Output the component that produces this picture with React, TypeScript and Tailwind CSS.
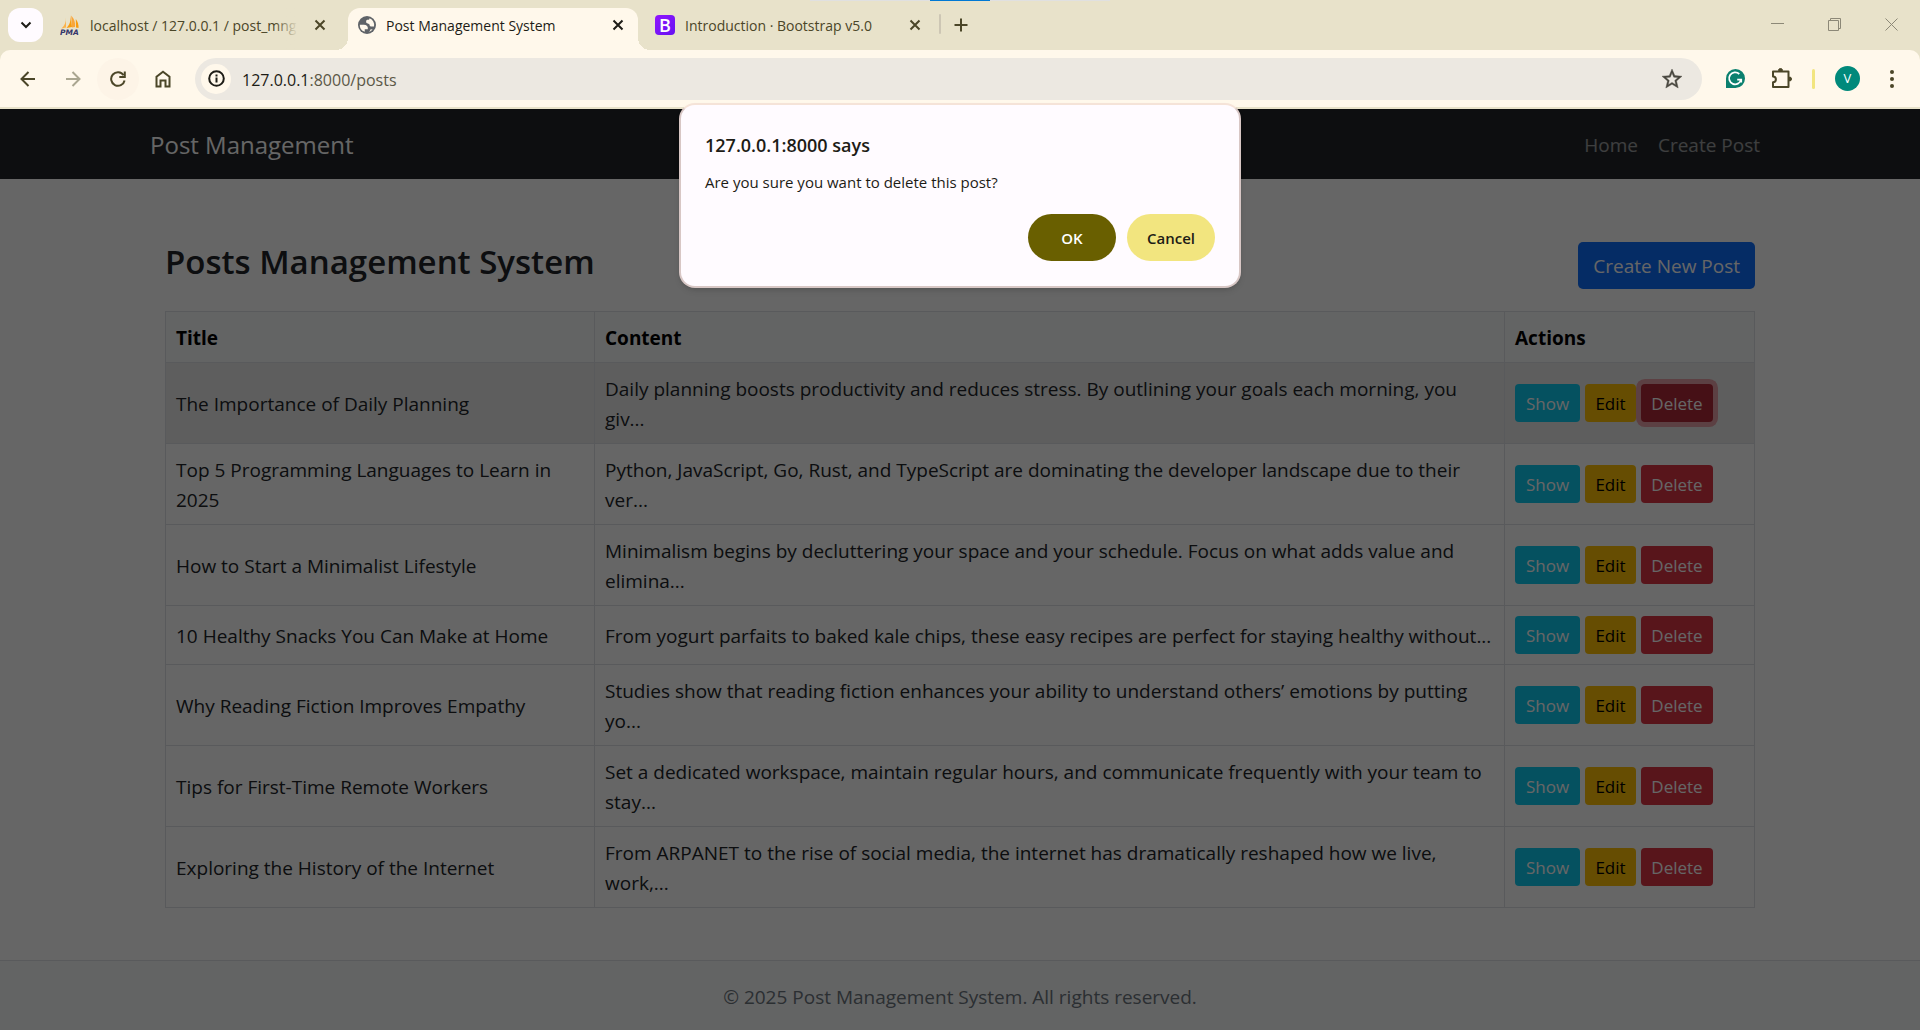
import type { ReactNode } from "react";

const posts = [
  { title: "The Importance of Daily Planning", content: "Daily planning boosts productivity and reduces stress. By outlining your goals each morning, you giv...", active: true },
  { title: "Top 5 Programming Languages to Learn in 2025", content: "Python, JavaScript, Go, Rust, and TypeScript are dominating the developer landscape due to their ver..." },
  { title: "How to Start a Minimalist Lifestyle", content: "Minimalism begins by decluttering your space and your schedule. Focus on what adds value and elimina..." },
  { title: "10 Healthy Snacks You Can Make at Home", content: "From yogurt parfaits to baked kale chips, these easy recipes are perfect for staying healthy without..." },
  { title: "Why Reading Fiction Improves Empathy", content: "Studies show that reading fiction enhances your ability to understand others’ emotions by putting yo..." },
  { title: "Tips for First-Time Remote Workers", content: "Set a dedicated workspace, maintain regular hours, and communicate frequently with your team to stay..." },
  { title: "Exploring the History of the Internet", content: "From ARPANET to the rise of social media, the internet has dramatically reshaped how we live, work,..." },
];

function CloseIcon() {
  return (
    <svg viewBox="0 0 12 12" className="size-3" fill="none" stroke="currentColor" strokeWidth="2">
      <path d="M1.5 1.5l9 9M10.5 1.5l-9 9" />
    </svg>
  );
}

function PmaIcon() {
  return (
    <svg viewBox="0 0 20 20" className="size-5 shrink-0" aria-hidden="true">
      <path d="M6 2.5C6.200 7 4.500 11 1.500 13.500L6 12.500z" fill="#fbb34c" />
      <path d="M10.500 0C11 6 9.500 10 6.500 13L12 12z" fill="#f89c0e" />
      <path d="M11.200 0.500C14.500 4 15.500 8 15 12L12 12.500z" fill="#f9a63a" />
      <path d="M15.800 4C18 7 18.700 10 18.500 13L16 12.500z" fill="#f89c0e" />
      <text x="0" y="19.500" fontSize="7.500" fontWeight="bold" fontStyle="italic" fontFamily="DejaVu Sans, sans-serif" fill="#34366b">PMA</text>
    </svg>
  );
}

function GlobeIcon() {
  return (
    <svg viewBox="2 2 20 20" className="size-[18px] shrink-0" aria-hidden="true">
      <circle cx="12" cy="12" r="10" fill="#5f6368" />
      <path d="M4 11.600h4.400c3.410.020 4.920 1.730 4.540 5.130H9.490v2.870A8 8 0 0 1 4 11.600z" fill="#fff8eb" />
      <path d="M14.800 4.500A8 8 0 0 1 19.800 13.600h-2.600c-1.600 0-2.400-.700-2.400-2 0-1.700-3.800-.700-3.800-3.300 0-1.600 1-2 2.200-2 .900 0 1.600-.700 1.600-1.800z" fill="#fff8eb" />
      <path d="M13 19.900c1.700-.500 2.700-1.600 3-3.200l2.300.200A8 8 0 0 1 13 19.900z" fill="#fff8eb" />
    </svg>
  );
}

function BootstrapIcon() {
  return (
    <span className="flex size-5 shrink-0 items-center justify-center rounded bg-linear-to-br from-[#9013fe] to-[#6610f2] text-lg font-semibold leading-5 text-white" aria-hidden="true">
      B
    </span>
  );
}

function Tab({ icon, label, className }: { icon: ReactNode; label: string; className: string }) {
  return (
    <div className={"flex h-[42px] items-center text-sm " + className}>
      {icon}
      <span className="ml-2.5 grow whitespace-nowrap pt-0.5">{label}</span>
      <button type="button" aria-label={"Close " + label} className="ml-2.5 flex size-5 shrink-0 items-center justify-center">
        <CloseIcon />
      </button>
    </div>
  );
}

function TabStrip() {
  return (
    <div className="relative flex h-[50px] items-end bg-[#e8e2ca] text-[#4b4628]">
      <div className="absolute inset-x-0 top-0 mx-auto flex h-px w-[300px] justify-center bg-[#e0e0e0]">
        <span className="h-px w-[60px] bg-[#0078d4]" />
      </div>
      <button type="button" aria-label="Search tabs" className="mb-2 ml-2 flex h-[34px] w-[35px] shrink-0 items-center justify-center rounded-xl bg-[#fffbff] text-[#1d1c16]">
        <svg viewBox="0 0 12 12" className="size-3" fill="none" stroke="currentColor" strokeWidth="2">
          <path d="M1.500 3.500L6 8l4.500-4.500" />
        </svg>
      </button>
      <div className="relative ml-[17px] flex w-[288px]">
        <Tab icon={<PmaIcon />} label="localhost / 127.0.0.1 / post_mng" className="w-[270px] pb-2" />
        <span className="absolute inset-y-0 left-[214px] w-6 bg-linear-to-r from-transparent to-[#e8e2ca]" />
      </div>
      <div className="relative">
        <span className="absolute bottom-0 -left-3 size-3 bg-[radial-gradient(circle_at_top_left,transparent_12px,#fff8eb_12px)]" />
        <Tab icon={<GlobeIcon />} label="Post Management System" className="w-[290px] rounded-t-xl bg-[#fff8eb] px-2.5 pb-2 text-[#1d1c16]" />
        <span className="absolute -right-3 bottom-0 size-3 bg-[radial-gradient(circle_at_top_right,transparent_12px,#fff8eb_12px)]" />
      </div>
      <Tab icon={<BootstrapIcon />} label="Introduction · Bootstrap v5.0" className="ml-[17px] w-[270px] pb-2" />
      <span className="mb-4 ml-3.5 h-5 w-0.5 rounded-full bg-[#cdc6b4]" />
      <button type="button" aria-label="New tab" className="mb-[17px] ml-3 flex size-4 items-center justify-center">
        <svg viewBox="0 0 14 14" className="size-3.5" fill="none" stroke="currentColor" strokeWidth="2">
          <path d="M7 0.500v13M0.500 7h13" />
        </svg>
      </button>
      <div className="mb-[19px] ml-auto flex items-center gap-11 pr-[22px] text-[#8c8877]">
        <button type="button" aria-label="Minimize" className="flex">
          <svg viewBox="0 0 13 13" className="size-[13px]" stroke="currentColor"><path d="M0 5.500h13" /></svg>
        </button>
        <button type="button" aria-label="Restore" className="flex">
          <svg viewBox="0 0 13 13" className="size-[13px]" fill="none" stroke="currentColor"><path d="M0.500 2.500h10v10h-10zM2.500 2.500v-2h10v10h-2" /></svg>
        </button>
        <button type="button" aria-label="Close window" className="flex">
          <svg viewBox="0 0 13 13" className="size-[13px]" fill="none" stroke="currentColor"><path d="M0.500 0.500l12 12M12.500 0.500l-12 12" /></svg>
        </button>
      </div>
    </div>
  );
}

function Toolbar() {
  return (
    <div className="bg-[#e8e2ca]">
      <div className="flex h-[57px] items-center rounded-t-[10px] bg-[#fff8eb] pl-[7px] pr-[18px] text-[#4b4628]">
        <button type="button" aria-label="Back" className="flex size-[42px] items-center justify-center">
          <svg viewBox="0 0 16 16" className="size-4" fill="none" stroke="currentColor" strokeWidth="2"><path d="M15 8H2M8.500 1L1.500 8l7 7" /></svg>
        </button>
        <button type="button" aria-label="Forward" className="ml-[3px] flex size-[42px] items-center justify-center text-[#aaa690]">
          <svg viewBox="0 0 16 16" className="size-4" fill="none" stroke="currentColor" strokeWidth="2"><path d="M1 8h13M7.500 1l7 7-7 7" /></svg>
        </button>
        <button type="button" aria-label="Reload" className="ml-[3px] flex size-[42px] items-center justify-center rounded-full bg-[#fdf4e7]">
          <svg viewBox="0 0 16 16" className="size-4" fill="none" stroke="currentColor" strokeWidth="2"><path d="M14.600 9.500A6.800 6.800 0 1 1 13.600 4.200" /><path d="M14.800 0.500v5.500H9.300" /></svg>
        </button>
        <button type="button" aria-label="Home" className="ml-[3px] flex size-[42px] items-center justify-center">
          <svg viewBox="0 0 16 18" className="h-[18px] w-4" fill="none" stroke="currentColor" strokeWidth="2"><path d="M1.500 16.500V6.800L8 1.700l6.500 5.100v9.700h-4v-6h-5v6z" /></svg>
        </button>
        <div className="ml-[11px] flex h-[42px] grow items-center rounded-full bg-[#ece8e1] pl-1.5 pr-5">
          <button type="button" aria-label="View site information" className="flex size-[30px] items-center justify-center rounded-full bg-[#fff8eb] text-[#1d1c16]">
            <svg viewBox="0 0 17 17" className="size-[17px]" fill="none" stroke="currentColor" strokeWidth="2"><circle cx="8.500" cy="8.500" r="7.300" /><path d="M8.500 7.600v4.800M8.500 4.500v1.900" /></svg>
          </button>
          <label className="relative ml-[11px] grow pt-0.5 text-base leading-6">
            <span aria-hidden="true" className="text-[#1d1c16]">127.0.0.1<span className="text-[#5b5747]">:8000/posts</span></span>
            <input aria-label="Address" defaultValue="127.0.0.1:8000/posts" className="absolute inset-0 w-full bg-transparent text-transparent outline-none" />
          </label>
          <button type="button" aria-label="Bookmark" className="flex text-[#49473f]">
            <svg viewBox="2 2 20 20" className="size-5" fill="currentColor"><path d="M22 9.240l-7.190-.620L12 2 9.190 8.630 2 9.240l5.460 4.730L5.820 21 12 17.270 18.180 21l-1.630-7.030L22 9.240zM12 15.400l-3.760 2.270 1-4.280-3.320-2.880 4.380-.380L12 6.100l1.710 4.040 4.380.380-3.320 2.880 1 4.280L12 15.400z" stroke="currentColor" strokeWidth="0.400" /></svg>
          </button>
        </div>
        <button type="button" aria-label="Grammarly" className="ml-6 flex">
          <svg viewBox="0 0 19 19" className="size-[19px]" fill="none"><path d="M9.500 0a9.500 9.500 0 1 1 0 19H0V9.500A9.500 9.500 0 0 1 9.500 0z" fill="#0b806e" /><path d="M13.300 5A6 6 0 1 0 15 10.600h-3.800M15.200 10v3.600" stroke="#fff" strokeWidth="1.800" /></svg>
        </button>
        <button type="button" aria-label="Extensions" className="ml-[26px] flex">
          <svg viewBox="0 0 21 21" className="size-[21px]" fill="none" stroke="currentColor" strokeWidth="2" strokeLinejoin="round"><path d="M2 3.500h15.500v15.500H2v-4.800a2.900 2.900 0 0 0 0-5.800z" /><path d="M7.500 2.500a2 2 0 0 1 4 0zM18.500 9a2 2 0 0 1 0 4z" fill="currentColor" strokeWidth="1" /></svg>
        </button>
        <span className="ml-5 h-5 w-[3px] rounded-full bg-[#f2e57f]" />
        <button type="button" aria-label="Profile" className="ml-5 flex size-[25px] items-center justify-center rounded-full bg-[#00897b] text-[13px] text-white">V</button>
        <button type="button" aria-label="Menu" className="ml-[22px] flex w-5 justify-center">
          <svg viewBox="0 0 4 18" className="h-[18px] w-1" fill="currentColor"><circle cx="2" cy="2" r="2" /><circle cx="2" cy="9" r="2" /><circle cx="2" cy="16" r="2" /></svg>
        </button>
      </div>
      <div className="h-0.5" />
    </div>
  );
}

function PostsTable() {
  return (
    <table className="mt-[22px] w-full table-fixed border-collapse border border-[#dee2e6] text-[19px] leading-[30px] text-[#212529]">
      <colgroup>
        <col className="w-[27%]" />
        <col />
        <col className="w-[250px]" />
      </colgroup>
      <thead className="bg-[#f8f9fa] text-left text-black">
        <tr>
          {["Title", "Content", "Actions"].map((name) => (
            <th key={name} scope="col" className="border border-[#dee2e6] px-2.5 pb-[9px] pt-[11px] font-bold">{name}</th>
          ))}
        </tr>
      </thead>
      <tbody>
        {posts.map((post) => (
          <tr key={post.title} className={post.active ? "bg-[#ececec]" : ""}>
            <td className="border border-[#dee2e6] px-2.5 pb-[9px] pt-[11px]">{post.title}</td>
            <td className="border border-[#dee2e6] px-2.5 pb-[9px] pt-[11px]">{post.content}</td>
            <td className="border border-[#dee2e6] p-2.5">
              <div className="flex gap-[5px] text-[17px]">
                <a href="#show" className="flex h-[38px] w-[65px] items-center justify-center rounded bg-[#0dcaf0] pt-0.5 text-white">Show</a>
                <a href="#edit" className="flex h-[38px] w-[51px] items-center justify-center rounded bg-[#ffc107] pt-0.5 text-black">Edit</a>
                <button type="button" className={"flex h-[38px] w-[72px] items-center justify-center rounded pt-0.5 text-white " + (post.active ? "bg-[#b02a37] ring-5 ring-[#e15361]/50" : "bg-[#dc3545]")}>Delete</button>
              </div>
            </td>
          </tr>
        ))}
      </tbody>
    </table>
  );
}

function ConfirmDialog() {
  return (
    <div role="dialog" aria-labelledby="dialog-title" aria-describedby="dialog-text" className="absolute inset-x-0 -top-1.5 mx-auto flex w-[562px] flex-col rounded-2xl border-2 border-[#d8c7c5] border-t-[#f5e3d8] bg-[#fffbff] px-6 pb-[25px] pt-[26px] text-[#1d1c16] shadow-md">
      <h2 id="dialog-title" className="text-lg font-semibold leading-7">127.0.0.1:8000 says</h2>
      <p id="dialog-text" className="mt-[11px] text-[15px] leading-6">Are you sure you want to delete this post?</p>
      <div className="mt-5 flex justify-end gap-[11px] text-[15px] font-semibold">
        <button type="button" className="h-[47px] w-[88px] rounded-full bg-[#695f00] pt-0.5 text-white">OK</button>
        <button type="button" className="h-[47px] w-[88px] rounded-full bg-[#f2e57f] pt-0.5">Cancel</button>
      </div>
    </div>
  );
}

export default function App() {
  return (
    <div className="flex min-h-screen flex-col font-['Open_Sans',sans-serif]">
      <header>
        <TabStrip />
        <Toolbar />
      </header>
      <div className="relative flex grow flex-col bg-white">
        <nav className="bg-[#212529]">
          <div className="mx-auto flex h-[70px] w-full max-w-[1650px] items-center justify-between px-[15px] pt-0.5">
            <a href="#top" className="text-2xl text-white">Post Management</a>
            <div className="flex gap-5 pr-2.5 text-[19px] text-white/55">
              <a href="#home">Home</a>
              <a href="#create">Create Post</a>
            </div>
          </div>
        </nav>
        <main className="mx-auto w-full max-w-[1650px] grow px-[30px] pb-[52px] pt-[63px]">
          <div className="flex items-start justify-between">
            <h1 className="text-[33px] font-semibold leading-10 text-[#212529]">Posts Management System</h1>
            <a href="#create" className="rounded-[5px] bg-[#0d6efd] px-[15px] pb-[7px] pt-[9px] text-[19px] leading-[31px] text-white">Create New Post</a>
          </div>
          <PostsTable />
        </main>
        <footer className="flex h-[70px] items-center justify-center border-t border-[#dee2e6] bg-[#f8f9fa] pt-1 text-[19px] text-[#6c757d]">
          © 2025 Post Management System. All rights reserved.
        </footer>
        <div className="absolute inset-0 bg-black/60" />
        <ConfirmDialog />
      </div>
    </div>
  );
}
